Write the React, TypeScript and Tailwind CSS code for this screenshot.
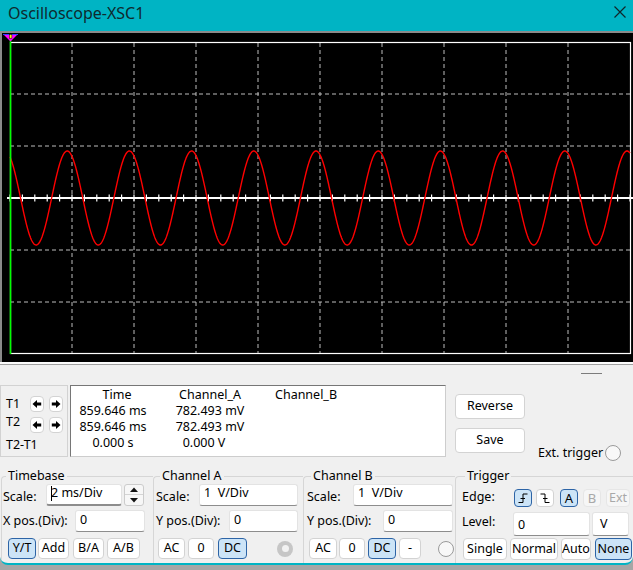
import React from "react";
import clsx from "clsx";

// screen geometry (page coordinates)
const VX = [72, 134, 196, 258, 320, 382, 444, 506, 568];
const HY = [94, 146, 250, 302];

function wavePath() {
  let d = "";
  for (let x = 10; x <= 630; x += 0.5) {
    const y = 198 - 47 * Math.cos((2 * Math.PI * (x - 5)) / 62.2);
    d += (x === 10 ? "M" : "L") + x.toFixed(1) + " " + y.toFixed(2) + " ";
  }
  return d;
}

function Screen() {
  const ticks = Array.from({ length: 51 }, (_, i) => 10 + i * 12.4);
  return (
    <svg width="631" height="329" viewBox="2 33 631 329" className="block">
      {VX.map((x) => (
        <line key={"v" + x} x1={x} y1={43} x2={x} y2={354} stroke="#bdbdbd" strokeWidth="1" strokeDasharray="4 3" />
      ))}
      {HY.map((y) => (
        <line key={"h" + y} x1={10} y1={y} x2={630} y2={y} stroke="#bdbdbd" strokeWidth="1" strokeDasharray="4 3" />
      ))}
      <rect x="10.5" y="42.5" width="620" height="311" fill="none" stroke="#ffffff" strokeWidth="1.2" />
      <line x1="7" y1="198" x2="633" y2="198" stroke="#ffffff" strokeWidth="2" />
      {ticks.map((x, i) => (
        <line key={"t" + i} x1={x} y1={194.5} x2={x} y2={201.5} stroke="#ffffff" strokeWidth="1.2" />
      ))}
      <path d={wavePath()} fill="none" stroke="#ff0000" strokeWidth="1.4" />
      <line x1="10.5" y1="37" x2="10.5" y2="354" stroke="#00ff00" strokeWidth="1.6" />
      <polygon points="3,34 18,34 10.5,41.5" fill="#ff00ff" />
      <line x1="3" y1="34.5" x2="18" y2="34.5" stroke="#3040ff" strokeWidth="1" />
      <rect x="9.3" y="34.6" width="2.6" height="3.6" fill="#ffff00" stroke="#000" strokeWidth="0.5" />
    </svg>
  );
}

function Btn({
  className,
  on,
  off,
  children,
}: {
  className: string;
  on?: boolean;
  off?: boolean;
  children: React.ReactNode;
}) {
  return (
    <div
      className={clsx(
        "flex items-center justify-center rounded-[4px] border leading-none",
        on
          ? "bg-[#cce4f7] border-[#2d64a6]"
          : off
          ? "bg-[#f6f6f6] border-[#e6e6e6] text-[#a8a8a8]"
          : "bg-white border-[#d3d3d3]",
        className
      )}
    >
      {children}
    </div>
  );
}

function Field({ className, children }: { className: string; children: React.ReactNode }) {
  return (
    <div
      className={clsx(
        "bg-white border border-[#e3e3e3] border-b-[#8d8d8d] rounded-[3px] pl-[4px] whitespace-pre",
        className
      )}
    >
      {children}
    </div>
  );
}

function Arrow({ right }: { right?: boolean }) {
  return (
    <svg width="10" height="10" viewBox="0 0 10 10">
      <path
        d={right ? "M9.5 5 L5 1 V3.6 H0.8 V6.4 H5 V9 Z" : "M0.5 5 L5 1 V3.6 H9.2 V6.4 H5 V9 Z"}
        fill="#000"
      />
    </svg>
  );
}

function Legend({ className, children }: { className: string; children: React.ReactNode }) {
  return <legend className={clsx("px-[2px] leading-[16px]", className)}>{children}</legend>;
}

export default function App() {
  return (
    <div className="w-[633px] h-[570px] bg-[#a6a6a6] overflow-hidden font-['Noto_Sans',sans-serif] text-[12.5px] text-black">
      <div className="flex flex-col bg-[#f0f0f0] border-b-2 border-[#00b4c4] rounded-b-[8px] overflow-hidden">
        {/* title bar */}
        <div className="h-[31px] bg-[#00b4c4] flex items-start justify-between pl-[8px] pr-[7px]">
          <span className="mt-[2px] text-[16px] leading-[22px] text-[#0f2a2e]">Oscilloscope-XSC1</span>
          <svg width="12" height="12" viewBox="0 0 12 12" className="mt-[6px]">
            <path d="M0.5 0.5 L11.5 11.5 M11.5 0.5 L0.5 11.5" stroke="#10262a" strokeWidth="1.2" />
          </svg>
        </div>

        {/* scope screen */}
        <div className="h-[331px] bg-black border-t-2 border-l-2 border-[#8a8a8a]">
          <Screen />
        </div>
        <div className="h-[2px] bg-[#fbfbfb]" />
        <div className="h-[1px] bg-[#a0a0a0]" />

        <div className="h-[20px] pt-[8px]">
          <div className="ml-[581px] w-[21px] h-[1px] bg-[#7c7c7c]" />
        </div>

        {/* cursor readout row */}
        <div className="flex h-[72px] items-start">
          <div className="w-[68px] h-[72px] border border-[#d2d2d2] leading-[16px]">
            <div className="flex items-start h-[16px] mt-[10px]">
              <span className="w-[29px] pl-[5px]">T1</span>
              <Btn className="w-[14px] h-[16px]">
                <Arrow />
              </Btn>
              <Btn className="w-[14px] h-[16px] ml-[5px]">
                <Arrow right />
              </Btn>
            </div>
            <div className="flex items-start h-[16px] mt-[5px]">
              <span className="w-[29px] pl-[5px] -mt-[3px]">T2</span>
              <Btn className="w-[14px] h-[16px]">
                <Arrow />
              </Btn>
              <Btn className="w-[14px] h-[16px] ml-[5px]">
                <Arrow right />
              </Btn>
            </div>
            <div className="mt-[4px] pl-[5px]">T2-T1</div>
          </div>

          <div className="ml-[2px] w-[376px] h-[72px] bg-white border border-[#cdcdcd] border-t-[#767676] border-l-[#767676] pt-[1px] leading-[16px]">
            <div className="grid grid-cols-[84px_110px_1fr]">
              <div className="text-center pl-[8px]">Time</div>
              <div className="text-center">Channel_A</div>
              <div className="pl-[10px]">Channel_B</div>
              <div className="text-center">859.646 ms</div>
              <div className="text-center">782.493 mV</div>
              <div />
              <div className="text-center">859.646 ms</div>
              <div className="text-center">782.493 mV</div>
              <div />
              <div className="text-center">0.000 s</div>
              <div className="text-center pr-[12px]">0.000 V</div>
              <div />
            </div>
          </div>

          <div className="ml-[9px] w-[70px] flex flex-col">
            <Btn className="mt-[9px] h-[25px]">Reverse</Btn>
            <Btn className="mt-[9px] h-[25px]">Save</Btn>
          </div>

          <div className="ml-[13px] mt-[60px] w-[83px] h-[16px] flex items-center justify-between leading-[16px]">
            <span>Ext. trigger</span>
            <div className="w-[16px] h-[16px] rounded-full border border-[#9a9a9a] bg-[#f8f8f8]" />
          </div>
        </div>

        {/* control groups */}
        <div className="flex h-[95px] mt-[11px] items-start">
          {/* Timebase */}
          <fieldset className="ml-[1px] w-[152px] h-[95px] border-l border-t border-[#d6d6d6] rounded-tl-[4px] min-w-0">
            <Legend className="ml-[4px]">Timebase</Legend>
            <div className="pl-[1px]">
              <div className="flex items-start h-[22px]">
                <span className="w-[43px] mt-[5px] leading-[16px]">Scale:</span>
                <Field className="w-[76px] h-[22px] leading-[16px] border-b-2 border-b-[#005fb8] flex items-start">
                  <span className="w-[1px] h-[15px] mt-[1px] bg-black" />
                  <span className="-ml-[1px]">2 ms/Div</span>
                </Field>
                <div className="ml-[2px] w-[20px] h-[22px] border border-[#cccccc] rounded-[3px] bg-[#f7f7f7] flex flex-col">
                  <div className="h-[10px] flex items-center justify-center border-b border-[#d4d4d4]">
                    <svg width="8" height="5" viewBox="0 0 8 5">
                      <path d="M0 5 L4 0.5 L8 5 Z" fill="#111" />
                    </svg>
                  </div>
                  <div className="flex-1 flex items-center justify-center">
                    <svg width="8" height="5" viewBox="0 0 8 5">
                      <path d="M0 0 L4 4.5 L8 0 Z" fill="#111" />
                    </svg>
                  </div>
                </div>
              </div>
              <div className="flex items-start h-[22px] mt-[4px]">
                <span className="w-[72px] mt-[3px] leading-[16px]">X pos.(Div):</span>
                <Field className="w-[70px] h-[22px] leading-[16px] pt-[1px]">0</Field>
              </div>
              <div className="flex items-start h-[21px] mt-[6px] pl-[5px]">
                <Btn on className="w-[28px] h-[21px]">Y/T</Btn>
                <Btn className="ml-[2px] w-[31px] h-[21px]">Add</Btn>
                <Btn className="ml-[4px] w-[31px] h-[21px]">B/A</Btn>
                <Btn className="ml-[3px] w-[33px] h-[21px]">A/B</Btn>
              </div>
            </div>
          </fieldset>

          {/* Channel A */}
          <fieldset className="w-[150px] h-[95px] border-l border-t border-[#d6d6d6] rounded-tl-[4px] min-w-0">
            <Legend className="ml-[6px]">Channel A</Legend>
            <div className="pl-[2px]">
              <div className="flex items-start h-[22px]">
                <span className="w-[43px] mt-[5px] leading-[16px]">Scale:</span>
                <Field className="w-[99px] h-[22px] leading-[16px]">1  V/Div</Field>
              </div>
              <div className="flex items-start h-[22px] mt-[4px]">
                <span className="w-[73px] mt-[3px] leading-[16px]">Y pos.(Div):</span>
                <Field className="w-[69px] h-[22px] leading-[16px] pt-[1px]">0</Field>
              </div>
              <div className="flex items-center h-[21px] mt-[6px] pl-[2px]">
                <Btn className="w-[27px] h-[21px]">AC</Btn>
                <Btn className="ml-[3px] w-[26px] h-[21px]">0</Btn>
                <Btn on className="ml-[4px] w-[29px] h-[21px]">DC</Btn>
                <div className="ml-[30px] w-[16px] h-[16px] rounded-full bg-[#c6c6c6] flex items-center justify-center">
                  <div className="w-[7px] h-[7px] rounded-full bg-[#f2f2f2]" />
                </div>
              </div>
            </div>
          </fieldset>

          {/* Channel B */}
          <fieldset className="w-[152px] h-[95px] border-l border-t border-[#d6d6d6] rounded-tl-[4px] min-w-0">
            <Legend className="ml-[7px]">Channel B</Legend>
            <div className="pl-[3px]">
              <div className="flex items-start h-[22px]">
                <span className="w-[46px] mt-[5px] leading-[16px]">Scale:</span>
                <Field className="w-[100px] h-[22px] leading-[16px]">1  V/Div</Field>
              </div>
              <div className="flex items-start h-[22px] mt-[4px]">
                <span className="w-[76px] mt-[3px] leading-[16px]">Y pos.(Div):</span>
                <Field className="w-[70px] h-[22px] leading-[16px] pt-[1px]">0</Field>
              </div>
              <div className="flex items-center h-[21px] mt-[6px] pl-[2px]">
                <Btn className="w-[28px] h-[21px]">AC</Btn>
                <Btn className="ml-[2px] w-[26px] h-[21px]">0</Btn>
                <Btn on className="ml-[3px] w-[28px] h-[21px]">DC</Btn>
                <Btn className="ml-[3px] w-[22px] h-[21px]">-</Btn>
                <div className="ml-[17px] w-[16px] h-[16px] rounded-full border border-[#9a9a9a] bg-[#f8f8f8]" />
              </div>
            </div>
          </fieldset>

          {/* Trigger */}
          <fieldset className="w-[178px] h-[95px] border-l border-t border-[#d6d6d6] rounded-tl-[4px] min-w-0">
            <Legend className="ml-[9px]">Trigger</Legend>
            <div className="pl-[6px]">
              <div className="flex items-start h-[22px]">
                <span className="w-[52px] mt-[5px] leading-[16px]">Edge:</span>
                <Btn on className="mt-[5px] w-[18px] h-[18px]">
                  <svg width="12" height="12" viewBox="0 0 12 12">
                    <path d="M1.5 10.5 H6 V2 H10.5 M3.5 6.5 H8" fill="none" stroke="#000" strokeWidth="1" />
                  </svg>
                </Btn>
                <Btn className="mt-[5px] ml-[4px] w-[18px] h-[18px]">
                  <svg width="12" height="12" viewBox="0 0 12 12">
                    <path d="M1.5 2 H6 V10.5 H10.5 M4 6.5 H8.5" fill="none" stroke="#000" strokeWidth="1" />
                  </svg>
                </Btn>
                <Btn on className="mt-[5px] ml-[6px] w-[18px] h-[18px] text-[13px]">A</Btn>
                <Btn off className="mt-[5px] ml-[5px] w-[18px] h-[18px] text-[13px]">B</Btn>
                <Btn off className="mt-[5px] ml-[5px] w-[24px] h-[18px]">Ext</Btn>
              </div>
              <div className="flex items-start h-[24px] mt-[6px]">
                <span className="w-[51px] mt-[2px] leading-[16px]">Level:</span>
                <Field className="w-[77px] h-[24px] leading-[16px] pt-[4px]">0</Field>
                <Field className="ml-[2px] w-[37px] h-[24px] leading-[16px] pt-[3px] pl-[7px]">V</Field>
              </div>
              <div className="flex items-start h-[22px] mt-[2px] -ml-[5px] pl-[6px]">
                <Btn className="w-[44px] h-[22px]">Single</Btn>
                <Btn className="ml-[3px] w-[48px] h-[22px]">Normal</Btn>
                <Btn className="ml-[3px] w-[30px] h-[22px]">Auto</Btn>
                <Btn on className="ml-[4px] w-[37px] h-[22px] shrink-0">None</Btn>
              </div>
            </div>
          </fieldset>
        </div>
      </div>
    </div>
  );
}
